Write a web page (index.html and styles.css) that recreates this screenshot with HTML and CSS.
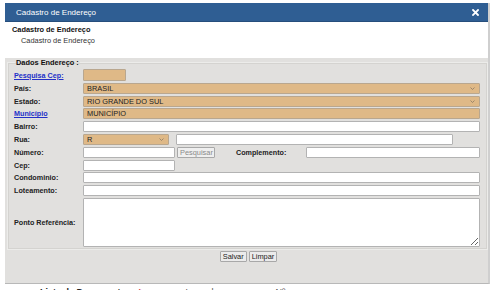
FILE: index.html
```html
<!DOCTYPE html>
<html lang="pt-BR">
<head>
  <meta charset="UTF-8">
  <title>Cadastro de Endereço</title>
  <link rel="stylesheet" href="styles.css">
</head>
<body>
  <div class="dialog">
    <div class="dialog-header">
      <span class="dialog-title">Cadastro de Endereço</span>
      <span class="dialog-close">
        <svg width="7" height="7" viewBox="0 0 7 7"><path d="M1 1L6 6M6 1L1 6" stroke="#fff" stroke-width="1.8" stroke-linecap="square"/></svg>
      </span>
    </div>
    <div class="dialog-intro">
      <div class="intro-title">Cadastro de Endereço</div>
      <div class="intro-sub">Cadastro de Endereço</div>
    </div>
    <div class="dialog-body">
      <fieldset class="dados">
        <legend>Dados Endereço :</legend>
        <div class="form-grid">
          <a href="#" class="lbl link">Pesquisa Cep:</a>
          <div><input type="text" class="field tan cep-search"></div>

          <span class="lbl">País:</span>
          <div class="select-wrap full">
            <select class="field tan"><option>BRASIL</option></select>
            <svg class="chev" width="5" height="3" viewBox="0 0 5 3"><path d="M0.5 0.5L2.5 2.5L4.5 0.5" fill="none" stroke="#8a7a66" stroke-width="0.8"/></svg>
          </div>

          <span class="lbl">Estado:</span>
          <div class="select-wrap full">
            <select class="field tan"><option>RIO GRANDE DO SUL</option></select>
            <svg class="chev" width="5" height="3" viewBox="0 0 5 3"><path d="M0.5 0.5L2.5 2.5L4.5 0.5" fill="none" stroke="#8a7a66" stroke-width="0.8"/></svg>
          </div>

          <a href="#" class="lbl link">Município</a>
          <div><input type="text" class="field tan full" value="MUNICÍPIO"></div>

          <span class="lbl">Bairro:</span>
          <div><input type="text" class="field full"></div>

          <span class="lbl">Rua:</span>
          <div class="row">
            <div class="select-wrap rua-tipo">
              <select class="field tan"><option>R</option></select>
              <svg class="chev" width="5" height="3" viewBox="0 0 5 3"><path d="M0.5 0.5L2.5 2.5L4.5 0.5" fill="none" stroke="#8a7a66" stroke-width="0.8"/></svg>
            </div>
            <input type="text" class="field rua-nome">
          </div>

          <span class="lbl">Número:</span>
          <div class="row">
            <input type="text" class="field short">
            <button class="btn disabled">Pesquisar</button>
            <span class="lbl compl-lbl">Complemento:</span>
            <input type="text" class="field compl">
          </div>

          <span class="lbl">Cep:</span>
          <div><input type="text" class="field short"></div>

          <span class="lbl">Condominio:</span>
          <div><input type="text" class="field full"></div>

          <span class="lbl">Loteamento:</span>
          <div><input type="text" class="field full"></div>

          <span class="lbl">Ponto Referência:</span>
          <div><textarea class="field full area"></textarea></div>
        </div>
      </fieldset>
      <div class="actions">
        <button class="btn">Salvar</button>
        <button class="btn">Limpar</button>
      </div>
    </div>
  </div>

  <div class="page-under">
    <span class="under-label">Lista de Documentos:</span><span class="req">*</span>
    <span class="under-col">Logradouro</span>
    <span class="under-col">Nº</span>
  </div>
</body>
</html>
```

FILE: styles.css
```css
body {
  margin: 0;
  background: #fff;
  font-family: "Liberation Sans", Arial, sans-serif;
  color: #222;
  overflow: hidden;
}
.dialog {
  margin: 3px 0 0 5px;
  width: 485px;
  height: 281px;
  box-sizing: border-box;
  border-right: 2px solid #cfcfcf;
  border-bottom: 1px solid #b8b8b8;
  background: #e1e0de;
  display: flex;
  flex-direction: column;
}
.dialog-header {
  height: 18px;
  background: #2f5e93;
  color: #fff;
  font-size: 8px;
  display: flex;
  align-items: center;
  justify-content: space-between;
  padding: 0 9px 0 11px;
  border-bottom: 1px solid #264e7c;
}
.dialog-close {
  display: flex;
}
.dialog-intro {
  background: #fff;
  height: 36px;
  padding: 3px 5px 0 7px;
  box-sizing: border-box;
  font-size: 7.4px;
  color: #111;
}
.intro-title {
  font-weight: bold;
  line-height: 10px;
}
.intro-sub {
  padding-left: 9px;
  line-height: 11px;
  color: #333;
}
.dialog-body {
  padding: 0 3px 0 2px;
  flex: 1;
}
.dados {
  margin: 0;
  padding: 2px 7px 2px 6px;
  border: 1px solid #ececea;
  box-shadow: inset 0 0 0 1px #d4d3d0;
}
.dados legend {
  font-size: 7.4px;
  font-weight: bold;
  padding: 0 1px;
  margin-left: 1px;
  color: #111;
}
.form-grid {
  display: grid;
  grid-template-columns: 69px 1fr;
  row-gap: 1.8px;
  align-items: center;
}
.lbl {
  font-size: 7.2px;
  font-weight: bold;
  color: #222;
}
.lbl.link {
  color: #2330c8;
  text-decoration: underline;
}
.field {
  height: 11px;
  box-sizing: border-box;
  border: 1px solid #b3b3b3;
  background: #fff;
  font-family: "Liberation Sans", Arial, sans-serif;
  font-size: 7.4px;
  color: #222;
  padding: 0 3px;
  margin: 0;
  display: block;
  border-radius: 1px;
}
.field.tan {
  background: #dfb987;
  border-color: #b9a78f;
}
.full {
  width: 100%;
}
.cep-search {
  width: 43px;
  height: 12px;
}
.select-wrap {
  position: relative;
}
.select-wrap select {
  width: 100%;
  appearance: none;
  -webkit-appearance: none;
  padding-left: 3px;
  outline: none;
}
.chev {
  position: absolute;
  right: 5px;
  top: 4px;
}
.row {
  display: flex;
  align-items: center;
}
.rua-tipo {
  width: 86px;
}
.rua-nome {
  margin-left: 7px;
  width: 277px;
}
.short {
  width: 92px;
}
.btn {
  height: 11px;
  box-sizing: border-box;
  border: 1px solid #a8a8a8;
  background: #ebebeb;
  font-family: "Liberation Sans", Arial, sans-serif;
  font-size: 7.4px;
  color: #222;
  padding: 0 2px;
  line-height: 9px;
  border-radius: 1px;
}
.btn.disabled {
  color: #8a8a8a;
  background: #efefef;
  margin-left: 2px;
  width: 38px;
}
.compl-lbl {
  margin-left: 21px;
  width: 70px;
}
.compl {
  width: 174px;
}
.area {
  height: 49px;
  resize: vertical;
}
.actions {
  display: flex;
  justify-content: center;
  gap: 2px;
  padding: 1px 0 0 5px;
}
.page-under {
  margin: 3px 0 0 40px;
  font-size: 9px;
  display: flex;
  gap: 4px;
}
.under-label {
  font-weight: bold;
  color: #222;
}
.req {
  color: #d01010;
  font-weight: bold;
}
.under-col {
  margin-left: 40px;
  color: #555;
}
```
